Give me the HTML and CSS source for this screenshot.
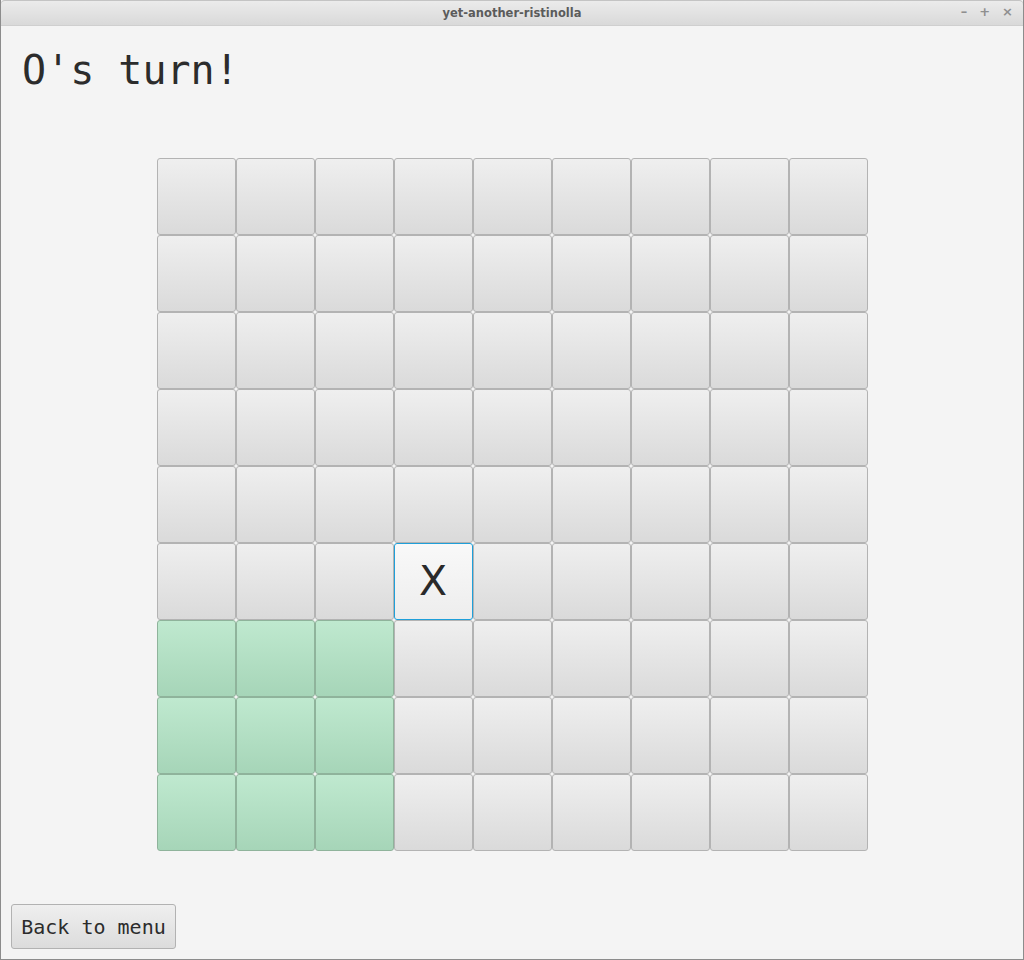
FILE: index.html
```html
<!DOCTYPE html>
<html>
<head>
<meta charset="utf-8">
<title>yet-another-ristinolla</title>
<link rel="stylesheet" href="styles.css">
</head>
<body>
<div class="window">
  <div class="titlebar">
    <span class="title">yet-another-ristinolla</span>
    <div class="controls">
      <span class="ctl">&#8211;</span>
      <span class="ctl">+</span>
      <span class="ctl">&#215;</span>
    </div>
  </div>
  <div class="content">
    <h1 class="turn">O's turn!</h1>
    <div class="board">
      <button class="cell"></button><button class="cell"></button><button class="cell"></button><button class="cell"></button><button class="cell"></button><button class="cell"></button><button class="cell"></button><button class="cell"></button><button class="cell"></button>
      <button class="cell"></button><button class="cell"></button><button class="cell"></button><button class="cell"></button><button class="cell"></button><button class="cell"></button><button class="cell"></button><button class="cell"></button><button class="cell"></button>
      <button class="cell"></button><button class="cell"></button><button class="cell"></button><button class="cell"></button><button class="cell"></button><button class="cell"></button><button class="cell"></button><button class="cell"></button><button class="cell"></button>
      <button class="cell"></button><button class="cell"></button><button class="cell"></button><button class="cell"></button><button class="cell"></button><button class="cell"></button><button class="cell"></button><button class="cell"></button><button class="cell"></button>
      <button class="cell"></button><button class="cell"></button><button class="cell"></button><button class="cell"></button><button class="cell"></button><button class="cell"></button><button class="cell"></button><button class="cell"></button><button class="cell"></button>
      <button class="cell"></button><button class="cell"></button><button class="cell"></button><button class="cell focused">X</button><button class="cell"></button><button class="cell"></button><button class="cell"></button><button class="cell"></button><button class="cell"></button>
      <button class="cell green"></button><button class="cell green"></button><button class="cell green"></button><button class="cell"></button><button class="cell"></button><button class="cell"></button><button class="cell"></button><button class="cell"></button><button class="cell"></button>
      <button class="cell green"></button><button class="cell green"></button><button class="cell green"></button><button class="cell"></button><button class="cell"></button><button class="cell"></button><button class="cell"></button><button class="cell"></button><button class="cell"></button>
      <button class="cell green"></button><button class="cell green"></button><button class="cell green"></button><button class="cell"></button><button class="cell"></button><button class="cell"></button><button class="cell"></button><button class="cell"></button><button class="cell"></button>
    </div>
    <div class="footer">
      <button class="back">Back to menu</button>
    </div>
  </div>
</div>
</body>
</html>
```

FILE: styles.css
```css
html, body {
  margin: 0;
  padding: 0;
  width: 1024px;
  height: 960px;
  overflow: hidden;
  background: #f4f4f4;
}

.window {
  box-sizing: border-box;
  width: 1024px;
  height: 960px;
  border: 1px solid #8c8c8c;
  border-top: none;
  display: flex;
  flex-direction: column;
  background: #f4f4f4;
}

.titlebar {
  height: 25px;
  flex: none;
  position: relative;
  display: flex;
  align-items: center;
  justify-content: center;
  background: linear-gradient(#ececec, #d9d9d9);
  border-bottom: 1px solid #cfcfcf;
  border-radius: 4px 4px 0 0;
  box-shadow: inset 0 1px 0 #c4c4c4;
}

.title {
  font-family: "DejaVu Sans", sans-serif;
  font-weight: bold;
  font-size: 11.5px;
  color: #5b5b5b;
}

.controls {
  position: absolute;
  right: 10px;
  top: 4px;
  display: flex;
  gap: 12px;
  font-family: "DejaVu Sans", sans-serif;
  font-size: 13px;
  font-weight: bold;
  color: #8f8f8f;
}

.content {
  flex: 1;
  display: flex;
  flex-direction: column;
}

.turn {
  margin: 0;
  padding: 21px 0 0 21px;
  font-family: "DejaVu Sans Mono", monospace;
  font-weight: normal;
  font-size: 40px;
  line-height: 46px;
  color: #2c2c2c;
}

.board {
  margin: 65px auto 0;
  display: grid;
  grid-template-columns: repeat(9, 79px);
  grid-template-rows: repeat(9, 77px);
}

.cell {
  box-sizing: border-box;
  margin: 0;
  padding: 0;
  width: 79px;
  height: 77px;
  border: 1px solid #b3b3b3;
  border-radius: 3px;
  background: linear-gradient(#efefef, #dadada);
  font-family: "DejaVu Sans", sans-serif;
  font-size: 41px;
  color: #2a2a2a;
  line-height: 1;
}

.cell.focused {
  border-color: #1f9fd9;
  background: linear-gradient(#f9f9f9, #ededed);
}

.cell.green {
  border-color: #8fb39b;
  background: linear-gradient(#bfe9cf, #a6d5b8);
}

.footer {
  margin-top: auto;
  padding: 0 0 10px 10px;
}

.back {
  box-sizing: border-box;
  width: 165px;
  height: 45px;
  border: 1px solid #b2b2b2;
  border-radius: 3px;
  background: linear-gradient(#efefef, #dcdcdc);
  font-family: "DejaVu Sans Mono", monospace;
  font-size: 20px;
  color: #2c2c2c;
  padding: 0;
}
```
